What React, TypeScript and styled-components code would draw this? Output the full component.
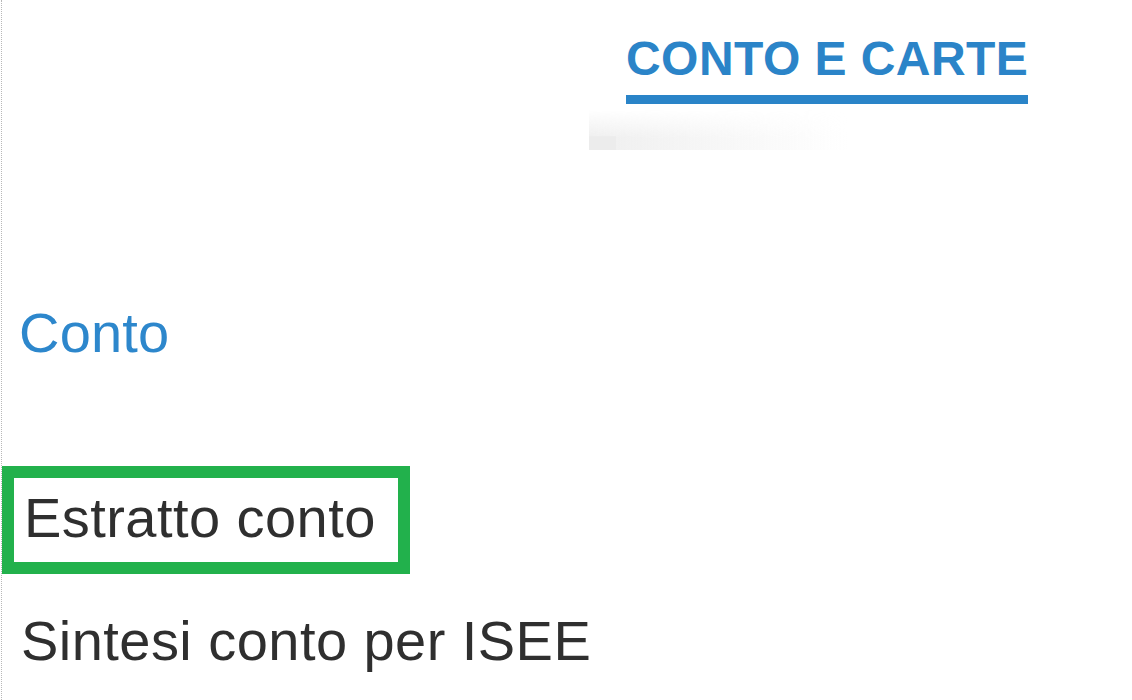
import styled, { createGlobalStyle } from 'styled-components';

const GlobalStyle = createGlobalStyle`
  html, body {
    margin: 0;
    padding: 0;
    background: #ffffff;
  }
  body {
    font-family: 'Liberation Sans', Arial, sans-serif;
  }
`;

const accounts = ['Estratto conto', 'Sintesi conto per ISEE'];

const App = () => {
  const selected = 'Estratto conto';

  return (
    <>
      <GlobalStyle />
      <Page>
        <TopBar>
          <Tab>CONTO E CARTE</Tab>
        </TopBar>
        <DropShade>
          <ShadeCorner />
        </DropShade>
        <Menu>
          <SectionTitle>Conto</SectionTitle>
          <Items>
            {accounts.map((label) => (
              <Item key={label} active={label === selected}>
                {label}
              </Item>
            ))}
          </Items>
        </Menu>
      </Page>
    </>
  );
};

const Page = styled.div`
  min-height: 100vh;
  box-sizing: border-box;
  border-left: 1px dotted #b8b8b8;
  margin-left: 1px;
  overflow: hidden;
`;

const TopBar = styled.nav`
  display: flex;
  padding: 31px 0 0 624px;
`;

const Tab = styled.div`
  display: inline-block;
  font-size: 48px;
  line-height: 55px;
  font-weight: 700;
  letter-spacing: 0.45px;
  color: #2b84c8;
  padding-bottom: 9px;
  border-bottom: 9px solid #2a84c8;
`;

const DropShade = styled.div`
  position: relative;
  margin: 6px 0 0 587px;
  width: 260px;
  height: 40px;
  background: linear-gradient(to right, rgba(232, 232, 232, 0.7), rgba(255, 255, 255, 0) 100%);
  -webkit-mask-image: linear-gradient(to bottom, transparent, #000 70%);
  mask-image: linear-gradient(to bottom, transparent, #000 70%);
`;

const ShadeCorner = styled.div`
  position: absolute;
  left: 0;
  bottom: 0;
  width: 27px;
  height: 14px;
  background: #ececec;
`;

const Menu = styled.div`
  margin-top: 151px;
`;

const SectionTitle = styled.h2`
  margin: 0 0 101px;
  padding-left: 17px;
  font-size: 56px;
  line-height: 64px;
  font-weight: 400;
  letter-spacing: 0.2px;
  color: #2d87cc;
`;

const Items = styled.ul`
  list-style: none;
  margin: 0;
  padding: 0;
  display: flex;
  flex-direction: column;
  align-items: flex-start;
  gap: 35px;
`;

const Item = styled.li<{ active?: boolean }>`
  box-sizing: border-box;
  font-size: 56px;
  line-height: 64px;
  letter-spacing: 0.45px;
  color: #2f2f2f;
  ${({ active }) =>
    active
      ? `
    width: 408px;
    border: 12px solid #22b14c;
    padding: 8px 0 12px 10px;
  `
      : `
    padding-left: 19px;
  `}
`;

export default App;
